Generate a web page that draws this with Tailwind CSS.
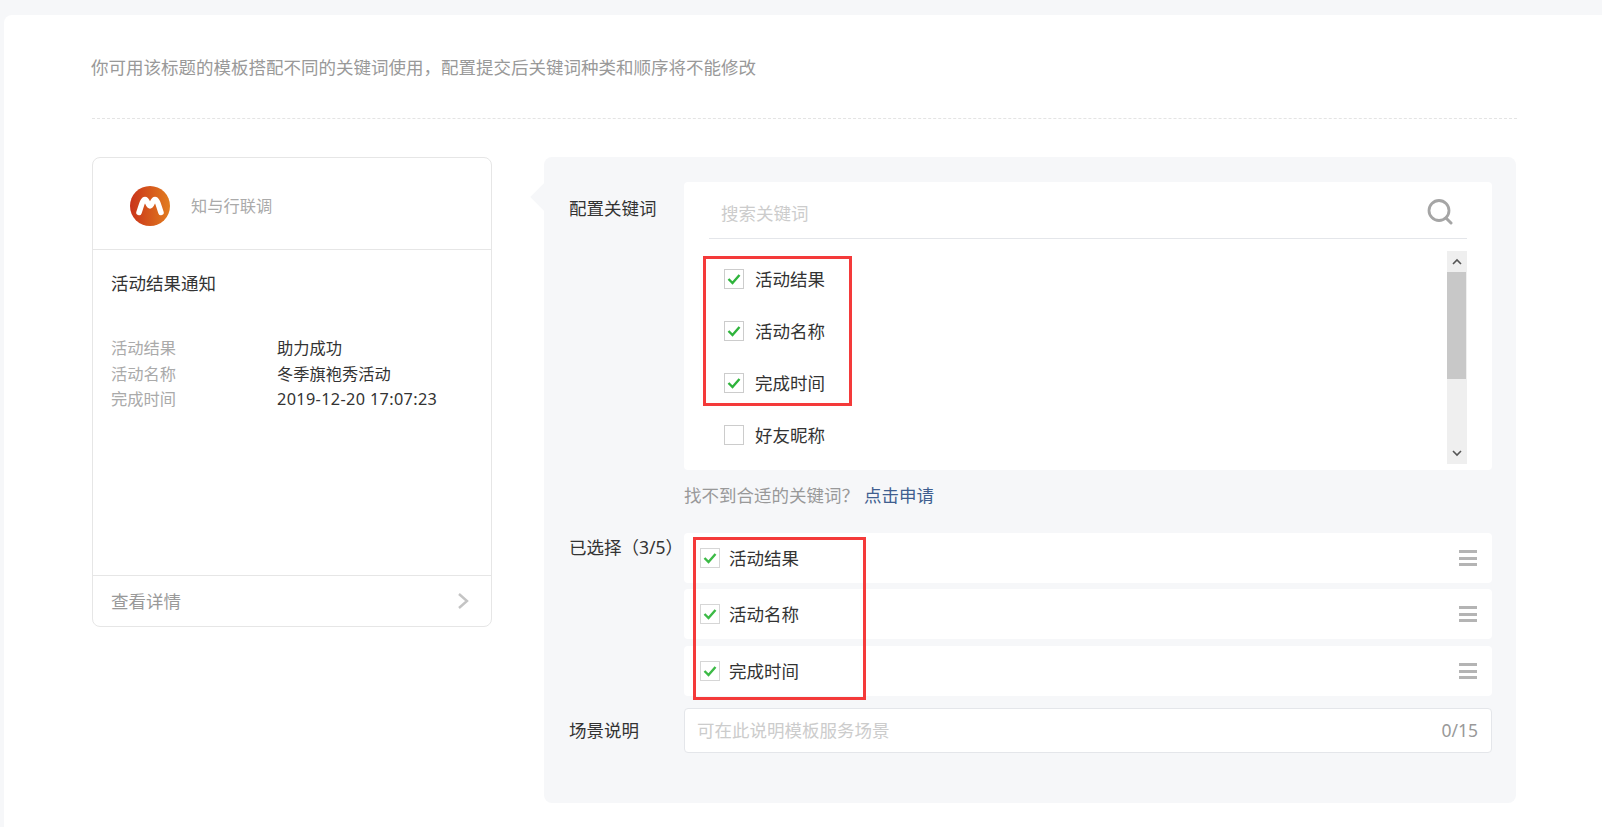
<!DOCTYPE html>
<html lang="zh-CN">
<head>
<meta charset="utf-8">
<title>配置关键词</title>
<script src="https://cdn.jsdelivr.net/npm/@tailwindcss/browser@4"></script>
</head>
<body class="bg-[#f6f7f9] font-['Noto_Sans','Noto_Sans_CJK_SC',sans-serif] text-[#333]">
<div class="h-[827px] overflow-hidden pt-[15px] pl-[4px]">
  <div class="h-[812px] rounded-tl-lg bg-white pl-[88px] pr-[85px]">
    <div class="h-[104px] border-b border-dashed border-[#e4e4e4] pt-[37px] text-[17.5px] leading-[30px] text-[#999]"><span class="ml-[-1px]">你可用该标题的模板搭配不同的关键词使用，配置提交后关键词种类和顺序将不能修改</span></div>
    <div class="mt-[38px] flex">
      <!-- preview card -->
      <div class="flex h-[470px] w-[400px] shrink-0 flex-col rounded-lg border border-[#e6e6e6]">
        <div class="flex h-[92px] items-center border-b border-[#e6e6e6] pl-[37px] pt-[4px]">
          <svg class="h-[40px] w-[40px]" viewBox="0 0 40 40">
            <defs><linearGradient id="lg" x1="0" x2="1" y1="0" y2="0"><stop offset="0" stop-color="#c9331a"/><stop offset="1" stop-color="#e27d1f"/></linearGradient></defs>
            <circle cx="20" cy="20" r="20" fill="url(#lg)"/>
            <path d="M9 26.5 C11 21 12.5 13.5 15 13.5 C17.5 13.5 18 20 20 20 C22 20 22.5 13.5 25 13.5 C27.5 13.5 29 21 31 26.5" fill="none" stroke="#fff" stroke-width="5.5" stroke-linecap="round" stroke-linejoin="round"/>
          </svg>
          <span class="ml-[21px] pt-[2px] text-[16.25px] text-[#aaa]">知与行联调</span>
        </div>
        <div class="flex-1 pl-[18px]">
          <div class="mt-[20px] text-[17.5px] leading-[26px] text-[#333]">活动结果通知</div>
          <div class="mt-[40px] grid grid-cols-[166px_1fr] text-[16.25px] leading-[25.7px]">
            <span class="text-[#aaa]">活动结果</span><span>助力成功</span>
            <span class="text-[#aaa]">活动名称</span><span>冬季旗袍秀活动</span>
            <span class="text-[#aaa]">完成时间</span><span class="tracking-[0.35px]">2019-12-20 17:07:23</span>
          </div>
        </div>
        <div class="flex h-[51px] items-center justify-between border-t border-[#e6e6e6] pr-[22px] pl-[18px] text-[17.5px] text-[#999]">
          <span>查看详情</span>
          <svg class="h-[18px] w-[12px]" viewBox="0 0 12 18"><path d="M2 2l8 7-8 7" fill="none" stroke="#c4c4c4" stroke-width="2.4"/></svg>
        </div>
      </div>
      <!-- config panel -->
      <div class="relative ml-[52px] h-[646px] w-[972px] shrink-0 rounded-lg bg-[#f6f7f9] pt-[25px] pr-[24px] pl-[25px]">
        <div class="absolute top-[30px] left-[-10px] h-[20px] w-[20px] rotate-45 bg-[#f6f7f9] [clip-path:polygon(0_0,0_100%,100%_100%)]"></div>
        <!-- keywords -->
        <div class="flex">
          <div class="w-[115px] pt-[12px] text-[17.5px] leading-[28px]">配置关键词</div>
          <div class="relative h-[288px] w-[808px] rounded bg-white pr-[25px] pl-[25px]">
            <div class="flex h-[57px] items-center justify-between border-b border-[#e4e6ea] pr-[14px] text-[17.5px] text-[#ccc]">
              <span class="pl-[12px] pt-[6px]">搜索关键词</span>
              <svg class="mt-[3px] h-[26px] w-[26px]" viewBox="0 0 26 26"><circle cx="12" cy="11.5" r="10" fill="none" stroke="#a5a5a5" stroke-width="2.8"/><path d="M19 19l5 5" stroke="#a5a5a5" stroke-width="3" stroke-linecap="round"/></svg>
            </div>
            <div class="flex justify-between pt-[12px]">
              <div class="pt-[18px] pl-[15px] text-[17.5px]">
                <div class="flex h-[20px] items-center"><span class="flex h-[20px] w-[20px] items-center justify-center border border-[#ccc]"><svg class="h-[12px] w-[14px]" viewBox="0 0 14 12"><path d="M1.5 6l4 4 7-8" fill="none" stroke="#2fb43c" stroke-width="2.4"/></svg></span><span class="ml-[11px]">活动结果</span></div>
                <div class="mt-[32px] flex h-[20px] items-center"><span class="flex h-[20px] w-[20px] items-center justify-center border border-[#ccc]"><svg class="h-[12px] w-[14px]" viewBox="0 0 14 12"><path d="M1.5 6l4 4 7-8" fill="none" stroke="#2fb43c" stroke-width="2.4"/></svg></span><span class="ml-[11px]">活动名称</span></div>
                <div class="mt-[32px] flex h-[20px] items-center"><span class="flex h-[20px] w-[20px] items-center justify-center border border-[#ccc]"><svg class="h-[12px] w-[14px]" viewBox="0 0 14 12"><path d="M1.5 6l4 4 7-8" fill="none" stroke="#2fb43c" stroke-width="2.4"/></svg></span><span class="ml-[11px]">完成时间</span></div>
                <div class="mt-[32px] flex h-[20px] items-center"><span class="h-[20px] w-[20px] border border-[#ccc]"></span><span class="ml-[11px]">好友昵称</span></div>
              </div>
              <div class="flex h-[213px] w-[20px] flex-col bg-[#efefef]">
                <div class="flex h-[21px] items-center justify-center"><svg class="h-[8px] w-[10px]" viewBox="0 0 10 8"><path d="M1 6l4-4 4 4" fill="none" stroke="#555" stroke-width="1.6"/></svg></div>
                <div class="h-[107px] w-[19px] bg-[#c8c8c8]"></div>
                <div class="flex flex-1 items-end justify-center pb-[7px]"><svg class="h-[8px] w-[10px]" viewBox="0 0 10 8"><path d="M1 2l4 4 4-4" fill="none" stroke="#555" stroke-width="1.6"/></svg></div>
              </div>
            </div>
            <div class="pointer-events-none absolute top-[74px] left-[19px] h-[150px] w-[149px] border-[3px] border-[#f43a3a]"></div>
          </div>
        </div>
        <div class="ml-[115px] flex h-[51px] items-center text-[17.5px] text-[#999]">
          <span>找不到合适的关键词？</span><span class="ml-[5px] text-[#3f5e8f]">点击申请</span>
        </div>
        <!-- selected -->
        <div class="mt-[12px] flex">
          <div class="w-[115px] text-[17.5px] leading-[29px]">已选择（3/5）</div>
          <div class="relative w-[808px]">
            <div class="flex h-[50px] items-center justify-between rounded bg-white pr-[15px] pl-[16px] text-[17.5px]"><div class="flex items-center"><span class="flex h-[20px] w-[20px] items-center justify-center border border-[#d6d6d6]"><svg class="h-[12px] w-[14px]" viewBox="0 0 14 12"><path d="M1.5 6l4 4 7-8" fill="none" stroke="#3cba46" stroke-width="2.4"/></svg></span><span class="ml-[9px]">活动结果</span></div><div class="flex h-[16px] w-[18px] flex-col justify-between"><i class="block h-[3px] bg-[#b4b4b4]"></i><i class="block h-[3px] bg-[#b4b4b4]"></i><i class="block h-[3px] bg-[#b4b4b4]"></i></div></div>
            <div class="mt-[6px] flex h-[50px] items-center justify-between rounded bg-white pr-[15px] pl-[16px] text-[17.5px]"><div class="flex items-center"><span class="flex h-[20px] w-[20px] items-center justify-center border border-[#d6d6d6]"><svg class="h-[12px] w-[14px]" viewBox="0 0 14 12"><path d="M1.5 6l4 4 7-8" fill="none" stroke="#3cba46" stroke-width="2.4"/></svg></span><span class="ml-[9px]">活动名称</span></div><div class="flex h-[16px] w-[18px] flex-col justify-between"><i class="block h-[3px] bg-[#b4b4b4]"></i><i class="block h-[3px] bg-[#b4b4b4]"></i><i class="block h-[3px] bg-[#b4b4b4]"></i></div></div>
            <div class="mt-[7px] flex h-[50px] items-center justify-between rounded bg-white pr-[15px] pl-[16px] text-[17.5px]"><div class="flex items-center"><span class="flex h-[20px] w-[20px] items-center justify-center border border-[#d6d6d6]"><svg class="h-[12px] w-[14px]" viewBox="0 0 14 12"><path d="M1.5 6l4 4 7-8" fill="none" stroke="#3cba46" stroke-width="2.4"/></svg></span><span class="ml-[9px]">完成时间</span></div><div class="flex h-[16px] w-[18px] flex-col justify-between"><i class="block h-[3px] bg-[#b4b4b4]"></i><i class="block h-[3px] bg-[#b4b4b4]"></i><i class="block h-[3px] bg-[#b4b4b4]"></i></div></div>
            <div class="pointer-events-none absolute top-[4px] left-[9px] h-[163px] w-[173px] border-[3px] border-[#f43a3a]"></div>
          </div>
        </div>
        <!-- description -->
        <div class="mt-[12px] flex">
          <div class="flex h-[45px] w-[115px] items-center text-[17.5px]">场景说明</div>
          <div class="flex h-[45px] w-[808px] items-center justify-between rounded border border-[#e4e6ea] bg-white pr-[13px] pl-[12px] text-[17.5px]">
            <span class="text-[#ccc]">可在此说明模板服务场景</span><span class="text-[#999]">0/15</span>
          </div>
        </div>
      </div>
    </div>
  </div>
</div>
</body>
</html>
